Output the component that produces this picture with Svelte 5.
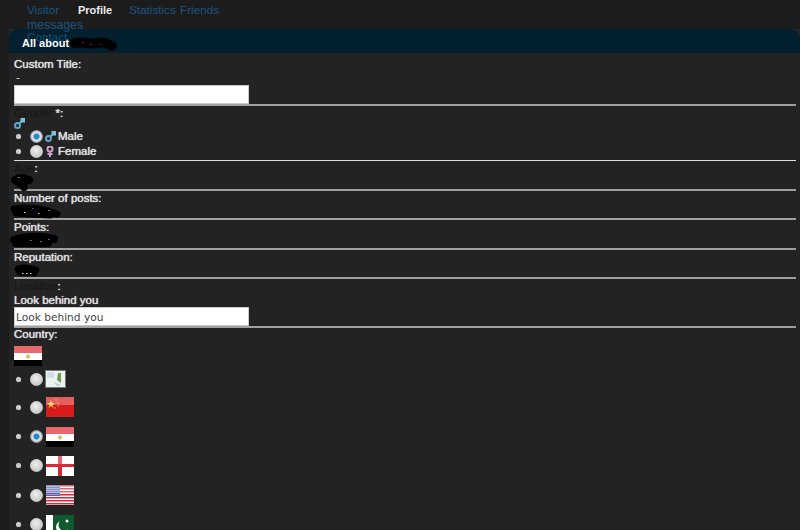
<script>
	const nav = ['Visitor', 'Profile', 'Statistics', 'Friends'];
	const flags = ['none', 'china', 'egypt', 'england', 'usa', 'pakistan'];
	let gender = 'male';
	let country = 'egypt';
</script>

{#snippet scribble(w, path, specks, sw = 9)}
	<svg class="scribble" width={w} height="16" viewBox="0 0 {w} 16">
		<path d={path} fill="none" stroke="#000" stroke-width={sw} stroke-linecap="round" stroke-linejoin="round" />
		{#each specks as s}
			<rect x={s[0]} y={s[1]} width="1.5" height="1" fill={s[2]} />
		{/each}
	</svg>
{/snippet}

{#snippet mars()}
	<svg class="mars" width="11" height="11" viewBox="0 0 11 11">
		<circle cx="3.5" cy="7.5" r="2.5" fill="none" stroke="#5fa8c8" stroke-width="2" />
		<path d="M5 6 L9 2" stroke="#5fa8c8" stroke-width="2" />
		<rect x="6.5" y="0" width="4.5" height="4.5" fill="#7cc0dc" />
	</svg>
{/snippet}

{#snippet flag(name)}
	{#if name === 'none'}
		<svg class="flag none" width="21" height="18" viewBox="0 0 21 18">
			<rect x="0.5" y="0.5" width="20" height="17" fill="#eef2f2" stroke="#777" />
			<rect x="2" y="2" width="7" height="6" fill="#cfe0ea" />
			<path d="M13 3 L16 3 L16 13 L12 10 Z" fill="#6f9c52" />
			<path d="M9 12 L16 15 L12 16 Z" fill="#a9d0d6" />
		</svg>
	{:else}
		<svg class="flag" width="28" height="20" viewBox="0 0 28 20">
			{#if name === 'china'}
				<rect width="28" height="20" fill="#d81c1c" />
				<path d="M5 3 L6 6 L9 6 L6.5 8 L7.5 11 L5 9 L2.5 11 L3.5 8 L1 6 L4 6 Z" fill="#f3d23a" />
				<circle cx="10" cy="3" r="0.8" fill="#f0a040" />
				<circle cx="12" cy="6" r="0.8" fill="#f0a040" />
				<circle cx="12" cy="9" r="0.8" fill="#f0a040" />
				<circle cx="9" cy="11" r="0.8" fill="#f0a040" />
			{:else if name === 'egypt'}
				<rect width="28" height="7" fill="#e02830" />
				<rect y="7" width="28" height="7" fill="#fff" />
				<rect y="14" width="28" height="6" fill="#000" />
				<circle cx="14" cy="10.5" r="2" fill="#d8b860" />
			{:else if name === 'england'}
				<rect width="28" height="20" fill="#fff" />
				<rect x="12" width="4" height="20" fill="#d8283a" />
				<rect y="8" width="28" height="3" fill="#d8283a" />
			{:else if name === 'usa'}
				<rect width="28" height="20" fill="#fff" />
				{#each [0, 3, 6, 9, 12, 15, 18] as y}
					<rect y={y} width="28" height="1.5" fill="#d8283a" />
				{/each}
				<rect width="14" height="11" fill="#5a5fa8" />
				{#each [1, 3, 5, 7, 9] as y}
					<rect y={y} width="14" height="1" fill="#9a9ccc" />
				{/each}
			{:else}
				<rect width="7" height="20" fill="#fff" />
				<rect x="7" width="21" height="20" fill="#0f5a2c" />
				<circle cx="16" cy="12" r="6" fill="#fff" />
				<circle cx="18" cy="10" r="5.5" fill="#0f5a2c" />
				<circle cx="21" cy="6" r="1.5" fill="#fff" />
			{/if}
			{#if name !== 'pakistan'}
				<rect width="28" height="8" fill="#fff" opacity="0.3" />
			{/if}
		</svg>
	{/if}
{/snippet}

<div class="page">
	<nav>
		{#each nav as item}
			<a href="#top" class:active={item === 'Profile'}>{item}</a>
		{/each}
		<a class="full messages" href="#top">messages</a>
		<a class="full contact" href="#top">Contact</a>
	</nav>

	<main>
		<h1>
			<span>All about</span>
			{@render scribble(48, 'M5 7 C12 5 20 9 28 7 S 38 9 42 10', [[12, 6, '#c01020'], [20, 8, '#c01020'], [30, 8, '#901020']], 10)}
		</h1>

		<form>
			<section>
				<label class="lbl" for="title">Custom Title:</label>
				<div class="val dash">-</div>
				<input id="title" type="text" />
			</section>

			<section class="gender">
				<div class="lbl"><span class="dim">Gender</span> *:</div>
				<div class="icon-line">{@render mars()}</div>
				<ul class="choices">
					<li>
						<label><input type="radio" bind:group={gender} value="male" /> {@render mars()} Male</label>
					</li>
					<li>
						<label>
							<input type="radio" bind:group={gender} value="female" />
							<svg class="venus" width="11" height="11" viewBox="0 0 11 11">
								<circle cx="5" cy="3" r="2.6" fill="none" stroke="#c8a0c8" stroke-width="2" />
								<path d="M5 5 V11 M2.5 8 H7.5" stroke="#c8a0c8" stroke-width="2" />
							</svg>
							Female
						</label>
					</li>
				</ul>
			</section>

			<section class="stat">
				<div class="lbl"><span class="dim">Age</span>:</div>
				<div class="val">{@render scribble(24, 'M1 5 C6 2 12 3 15 5 L4 7 C7 9 10 11 10 12', [[4, 2, '#58a8c0']], 8)}</div>
			</section>
			<section class="stat">
				<div class="lbl">Number of posts:</div>
				<div class="val">{@render scribble(52, 'M0 4 C12 2 26 4 34 6 L43 9 M2 8 L36 10', [[10, 7, '#ddd'], [24, 8, '#ccc'], [34, 5, '#c0a020'], [18, 3, '#4060c0']], 7)}</div>
			</section>
			<section class="stat">
				<div class="lbl">Points:</div>
				<div class="val">{@render scribble(50, 'M0 6 C10 2 26 2 40 5 M2 9 L34 9', [[16, 6, '#888'], [26, 7, '#a08050'], [34, 5, '#6080a0']], 8)}</div>
			</section>
			<section class="stat">
				<div class="lbl">Reputation:</div>
				<div class="val">{@render scribble(28, 'M4 5 C10 3 16 4 22 6 M6 8 L20 9', [[8, 9, '#ddd'], [12, 9, '#ddd'], [16, 9, '#ddd']], 7)}</div>
			</section>

			<section>
				<div class="lbl"><span class="dim">Location</span>:</div>
				<label class="lbl" for="loc">Look behind you</label>
				<input id="loc" type="text" value="Look behind you" />
			</section>

			<section class="country">
				<div class="lbl">Country:</div>
				<div class="current">{@render flag('egypt')}</div>
				<ul class="flags">
					{#each flags as f}
						<li>
							<label><input type="radio" bind:group={country} value={f} /> {@render flag(f)}</label>
						</li>
					{/each}
				</ul>
			</section>
		</form>
	</main>
</div>

<style>
	:global(body) {
		margin: 0;
		background: #1c1c1c;
		overflow: hidden;
	}

	.page {
		height: 530px;
		overflow: hidden;
		font-family: 'Liberation Sans', Arial, sans-serif;
		font-size: 11.5px;
		color: #ddd;
	}

	nav {
		display: grid;
		grid-template-columns: repeat(4, 51px);
		grid-auto-rows: 13px;
		height: 29px;
		padding-left: 27px;
		padding-top: 3px;
		box-sizing: border-box;
		line-height: 14px;
		font-size: 11.7px;
	}

	nav a {
		color: #1c5480;
		text-decoration: none;
		white-space: nowrap;
	}

	nav a.active {
		color: #eee;
		font-size: 11px;
		font-weight: bold;
	}

	nav a.full {
		grid-column: 1 / -1;
	}

	nav a.messages {
		margin-top: 2px;
		font-size: 12.3px;
	}

	/* the link wraps onto the header bar in the original */
	nav a.contact {
		position: relative;
		z-index: 1;
		color: #174f72;
		margin-top: 1px;
	}

	main {
		margin-left: 9px;
		background: #232323;
	}

	h1 {
		margin: 0;
		height: 24px;
		padding-left: 13px;
		background: #02202f;
		border-radius: 10px 10px 0 0;
		color: #fff;
		font-size: 11px;
		font-weight: bold;
		display: flex;
		align-items: center;
		gap: 1px;
	}

	h1 span {
		position: relative;
		z-index: 2;
		top: 2px;
	}

	h1 .scribble {
		margin-top: 6px;
	}

	form {
		padding: 4px 4px 0 5px;
	}

	section {
		border-bottom: 2px solid #a0a0a0;
	}

	.lbl {
		display: block;
		line-height: 14px;
		color: #ddd;
		text-shadow: 0 0 1px #fff;
		-webkit-text-stroke: 0.2px #ddd;
	}

	.dim {
		color: #161616;
		text-shadow: none;
		-webkit-text-stroke: 0;
	}

	.val {
		height: 14px;
		line-height: 14px;
	}

	.dash {
		height: 14px;
		padding-left: 2px;
		line-height: 12px;
	}

	.scribble {
		display: block;
		overflow: visible;
	}

	section input[type='text'] {
		display: block;
		box-sizing: border-box;
		width: 235px;
		height: 19px;
		margin: 0;
		padding: 0 1px;
		border: 1px solid #ccc;
		background: #fff;
		color: #444;
		font-family: 'DejaVu Sans', sans-serif;
		font-size: 10.6px;
		border-radius: 0;
	}

	.icon-line {
		height: 12px;
		margin-top: -3px;
	}

	.mars, .venus, .flag {
		vertical-align: middle;
		flex: none;
	}

	ul {
		list-style: none;
		margin: 0;
		padding: 0 0 0 2px;
		color: #ddd;
	}

	li {
		display: flex;
		align-items: center;
	}

	li::before {
		content: '';
		flex: none;
		width: 5px;
		height: 5px;
		margin-right: 9px;
		border-radius: 50%;
		background: #ccc;
		box-shadow: 0 0 1px #888;
	}

	.gender {
		border-bottom: 1px solid #ddd;
		padding-bottom: 1px;
	}

	.choices li {
		height: 15px;
		line-height: 15px;
	}

	.choices label {
		display: flex;
		align-items: center;
		gap: 2px;
		text-shadow: 0 0 1px #fff;
		-webkit-text-stroke: 0.2px #ddd;
	}

	input[type='radio'] {
		appearance: none;
		width: 13px;
		height: 13px;
		margin: 0;
		border-radius: 50%;
		background: radial-gradient(circle at 45% 40%, #eee, #ccc 60%, #888);
		flex: none;
	}

	input[type='radio']:checked {
		background: radial-gradient(circle, #1f8cc8 0 2.5px, #dde 3.5px 4.5px, #888 6.5px);
	}

	.stat {
		height: 27.5px;
	}

	.country {
		border-bottom: none;
		margin-top: -1px;
	}

	.current {
		height: 25px;
		padding-top: 5px;
		box-sizing: border-box;
	}

	.flags li {
		height: 29.4px;
	}

	.flags li:first-child {
		height: 26.5px;
	}

	.flags label {
		display: flex;
		align-items: center;
		gap: 3px;
		height: 100%;
	}

	.flag.none {
		margin: -1px 0 0 -1px;
	}
</style>
